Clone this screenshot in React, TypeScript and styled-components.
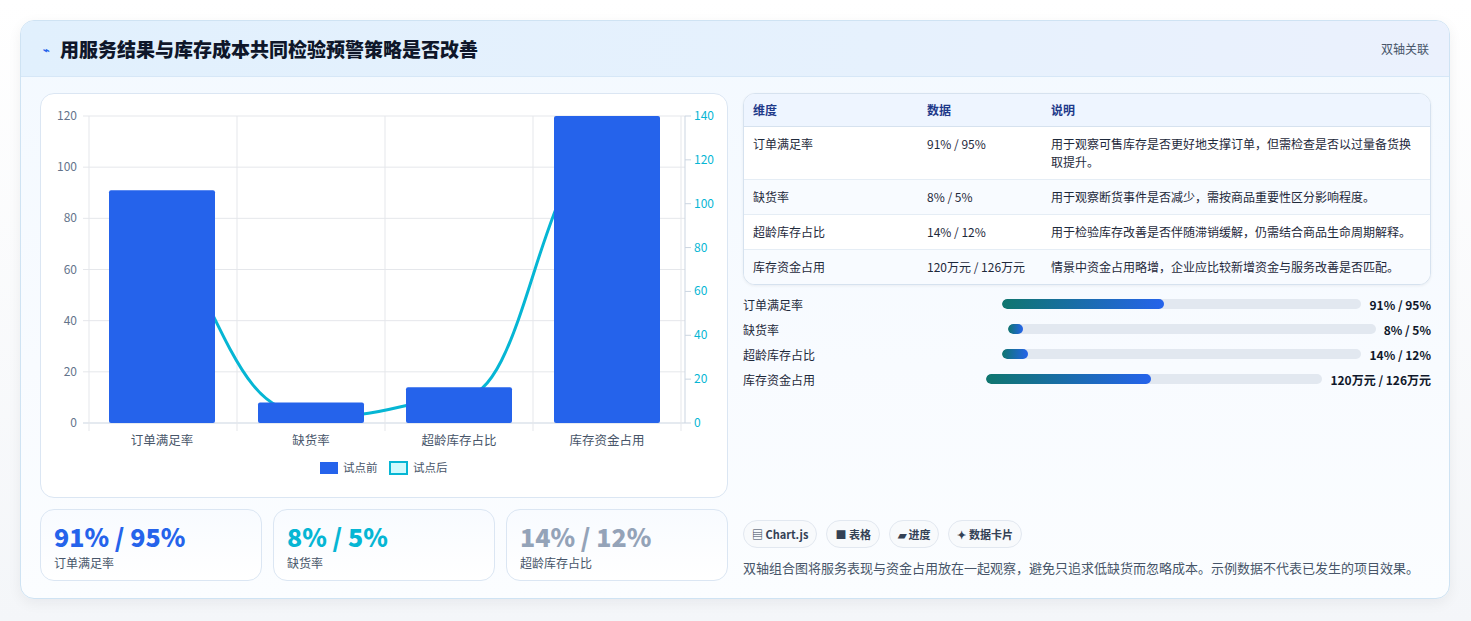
import React from "react";
import styled, { createGlobalStyle } from "styled-components";

const Global = createGlobalStyle`
  html, body { margin: 0; padding: 0; background: #eef2f7; }
  body { font-family: "Noto Sans CJK SC", "Noto Sans", sans-serif; color: #0f172a; }
`;

const Page = styled.div`
  padding: 20px 21px 22px 20px;
  background: linear-gradient(180deg, #ffffff 0%, #f4f6f9 100%);
`;

const Card = styled.div`
  border: 1px solid #cfe3f3;
  border-radius: 14px;
  background: linear-gradient(180deg, #f3f9ff 0%, #f8fbff 60%, #fbfdff 100%);
  box-shadow: 0 4px 14px rgba(15, 23, 42, 0.06);
  overflow: hidden;
`;

const Header = styled.div`
  height: 55px;
  display: flex;
  align-items: center;
  justify-content: space-between;
  padding: 0 20px 0 22px;
  background: linear-gradient(90deg, #e1f0fd 0%, #e6f1fd 60%, #ebf1fd 100%);
  border-bottom: 1px solid #d6e7f7;
`;

const Title = styled.h1`
  margin: 0;
  font-size: 19px;
  font-weight: 800;
  display: flex;
  align-items: center;
  gap: 10px;
  color: #0f172a;
`;

const Bolt = styled.span`
  color: #2563eb;
  font-size: 11px;
`;

const Tag = styled.span`
  font-size: 12px;
  color: #475569;
`;

const Body = styled.div`
  display: grid;
  grid-template-columns: 688px 1fr;
  gap: 15px;
  padding: 16px 18px 17px 19px;
`;

const LeftCol = styled.div`
  display: flex;
  flex-direction: column;
  gap: 11px;
`;

const ChartCard = styled.div`
  height: 403px;
  border: 1px solid #dbe6f3;
  border-radius: 14px;
  background: #fff;
  overflow: hidden;
`;

const Kpis = styled.div`
  display: grid;
  grid-template-columns: repeat(3, 1fr);
  gap: 11px;
`;

const Kpi = styled.div`
  height: 72px;
  box-sizing: border-box;
  border: 1px solid #dbe6f3;
  border-radius: 14px;
  background: linear-gradient(180deg, #f8fbff, #ffffff);
  padding: 10px 13px;
`;

const KpiValue = styled.div<{ $c: string }>`
  font-size: 25px;
  font-weight: 900;
  color: ${(p) => p.$c};
  line-height: 32px;
`;

const KpiLabel = styled.div`
  font-size: 12px;
  color: #475569;
  margin-top: 2px;
`;

const RightCol = styled.div`
  display: flex;
  flex-direction: column;
`;

const Table = styled.table`
  width: 100%;
  table-layout: fixed;
  border-collapse: separate;
  border-spacing: 0;
  border: 1px solid #d6e2ef;
  border-radius: 12px;
  overflow: hidden;
  font-size: 12px;
  background: #fff;
  box-shadow: 0 1px 3px rgba(15, 23, 42, 0.06);
`;

const Th = styled.th<{ $w?: number }>`
  text-align: left;
  font-weight: 700;
  color: #1e3a8a;
  background: #eef5ff;
  padding: 8px 9px;
  line-height: 16px;
  width: ${(p) => (p.$w ? p.$w + "px" : "auto")};
  border-bottom: 1px solid #d6e2ef;
`;

const Tr = styled.tr<{ $alt?: boolean }>`
  background: ${(p) => (p.$alt ? "#f8fbff" : "#ffffff")};
  td { border-bottom: 1px solid #e5edf5; }
  &:last-child td { border-bottom: none; }
`;

const Td = styled.td`
  padding: 8px 9px;
  line-height: 18px;
  color: #1e293b;
  vertical-align: top;
`;

const Bars = styled.div`
  display: flex;
  flex-direction: column;
  gap: 7px;
  margin-top: 10px;
`;

const BarRow = styled.div`
  display: flex;
  align-items: center;
  gap: 8px;
  height: 18px;
  font-size: 12px;
`;

const BarLabel = styled.div`
  flex: 0.7;
  color: #1e293b;
`;

const Track = styled.div`
  flex: 1;
  height: 10px;
  border-radius: 5px;
  background: #e2e8f0;
  overflow: hidden;
`;

const Fill = styled.div`
  height: 100%;
  border-radius: 5px;
  background: linear-gradient(90deg, #0f766e, #2563eb);
`;

const BarValue = styled.div`
  font-weight: 700;
  color: #0f172a;
  white-space: nowrap;
`;

const Footer = styled.div`
  margin-top: auto;
`;

const Chips = styled.div`
  display: flex;
  gap: 9px;
`;

const Chip = styled.span`
  height: 26px;
  display: inline-flex;
  align-items: center;
  padding: 0 8px;
  border: 1px solid #e2e8f0;
  border-radius: 14px;
  background: #f8fafc;
  font-size: 11px;
  font-weight: 700;
  color: #334155;
`;

const Note = styled.p`
  margin: 10px 0 4px;
  font-size: 13px;
  color: #475569;
`;

const cats = ["订单满足率", "缺货率", "超龄库存占比", "库存资金占用"];
const before = [91, 8, 14, 120];
const after = [95, 5, 12, 126];
const centers = [161, 310, 458, 606];
const yL = (v: number) => 422 - (v * 307) / 120;
const yR = (v: number) => 422 - (v * 307) / 140;

function linePath() {
  const pts = centers.map((x, i) => [x, yR(after[i])]);
  let d = `M${pts[0][0]},${pts[0][1]}`;
  for (let i = 0; i < pts.length - 1; i++) {
    const [x0, y0] = pts[i];
    const [x1, y1] = pts[i + 1];
    const dx = (x1 - x0) * 0.45;
    d += ` C${x0 + dx},${y0 + (i === 0 ? 120 : 10)} ${x1 - dx},${y1 + (i === 2 ? 0 : 6)} ${x1},${y1}`;
  }
  return d;
}

const Chart = () => (
  <svg width="688" height="403" viewBox="40 93 688 403" fontFamily="'Noto Sans CJK SC', sans-serif">
    {[0, 20, 40, 60, 80, 100, 120].map((v) => (
      <g key={v}>
        <line x1={82} x2={684} y1={yL(v)} y2={yL(v)} stroke={v === 0 ? "#cbd5e1" : "#e5e7eb"} />
        <text x={76} y={yL(v) + 4} fontSize="12" fill="#64748b" textAnchor="end">{v}</text>
      </g>
    ))}
    {[0, 20, 40, 60, 80, 100, 120, 140].map((v) => (
      <g key={v}>
        <line x1={684} x2={690} y1={yR(v)} y2={yR(v)} stroke="#cbd5e1" />
        <text x={693} y={yR(v) + 4} fontSize="12" fill="#06b6d4">{v}</text>
      </g>
    ))}
    {[88, 236, 384, 532, 680].map((x) => (
      <line key={x} x1={x} x2={x} y1={115} y2={430} stroke="#e5e7eb" />
    ))}
    <line x1={684} x2={684} y1={115} y2={422} stroke="#cbd5e1" />
    <path d={linePath()} fill="none" stroke="#06b6d4" strokeWidth="3" />
    {centers.map((x, i) => (
      <rect key={i} x={x - 53} y={yL(before[i])} width={106} height={422 - yL(before[i])} rx={2} fill="#2563eb" />
    ))}
    {cats.map((c, i) => (
      <text key={c} x={centers[i]} y={444} fontSize="12.5" fill="#475569" textAnchor="middle">{c}</text>
    ))}
    <rect x={319} y={461} width={18} height={12} fill="#2563eb" />
    <text x={342} y={471} fontSize="11.5" fill="#475569">试点前</text>
    <rect x={389} y={461} width={17} height={12} fill="#cffafe" stroke="#06b6d4" strokeWidth="2" />
    <text x={412} y={471} fontSize="11.5" fill="#475569">试点后</text>
  </svg>
);

const rows = [
  ["订单满足率", "91% / 95%", "用于观察可售库存是否更好地支撑订单，但需检查是否以过量备货换取提升。"],
  ["缺货率", "8% / 5%", "用于观察断货事件是否减少，需按商品重要性区分影响程度。"],
  ["超龄库存占比", "14% / 12%", "用于检验库存改善是否伴随滞销缓解，仍需结合商品生命周期解释。"],
  ["库存资金占用", "120万元 / 126万元", "情景中资金占用略增，企业应比较新增资金与服务改善是否匹配。"],
];

const bars: [string, string, number][] = [
  ["订单满足率", "91% / 95%", 45],
  ["缺货率", "8% / 5%", 4],
  ["超龄库存占比", "14% / 12%", 7],
  ["库存资金占用", "120万元 / 126万元", 49],
];

export default function App() {
  return (
    <Page>
      <Global />
      <Card>
        <Header>
          <Title>
            <Bolt>⌁</Bolt>用服务结果与库存成本共同检验预警策略是否改善
          </Title>
          <Tag>双轴关联</Tag>
        </Header>
        <Body>
          <LeftCol>
            <ChartCard>
              <Chart />
            </ChartCard>
            <Kpis>
              <Kpi>
                <KpiValue $c="#2563eb">91% / 95%</KpiValue>
                <KpiLabel>订单满足率</KpiLabel>
              </Kpi>
              <Kpi>
                <KpiValue $c="#06b6d4">8% / 5%</KpiValue>
                <KpiLabel>缺货率</KpiLabel>
              </Kpi>
              <Kpi>
                <KpiValue $c="#94a3b8">14% / 12%</KpiValue>
                <KpiLabel>超龄库存占比</KpiLabel>
              </Kpi>
            </Kpis>
          </LeftCol>
          <RightCol>
            <Table>
              <thead>
                <tr>
                  <Th $w={156}>维度</Th>
                  <Th $w={106}>数据</Th>
                  <Th>说明</Th>
                </tr>
              </thead>
              <tbody>
                {rows.map((r, i) => (
                  <Tr key={r[0]} $alt={i % 2 === 1}>
                    <Td>{r[0]}</Td>
                    <Td>{r[1]}</Td>
                    <Td>{r[2]}</Td>
                  </Tr>
                ))}
              </tbody>
            </Table>
            <Bars>
              {bars.map(([l, v, p]) => (
                <BarRow key={l}>
                  <BarLabel>{l}</BarLabel>
                  <Track>
                    <Fill style={{ width: p + "%" }} />
                  </Track>
                  <BarValue>{v}</BarValue>
                </BarRow>
              ))}
            </Bars>
            <Footer>
              <Chips>
                <Chip>▤ Chart.js</Chip>
                <Chip>■ 表格</Chip>
                <Chip>▰ 进度</Chip>
                <Chip>✦ 数据卡片</Chip>
              </Chips>
              <Note>双轴组合图将服务表现与资金占用放在一起观察，避免只追求低缺货而忽略成本。示例数据不代表已发生的项目效果。</Note>
            </Footer>
          </RightCol>
        </Body>
      </Card>
    </Page>
  );
}
